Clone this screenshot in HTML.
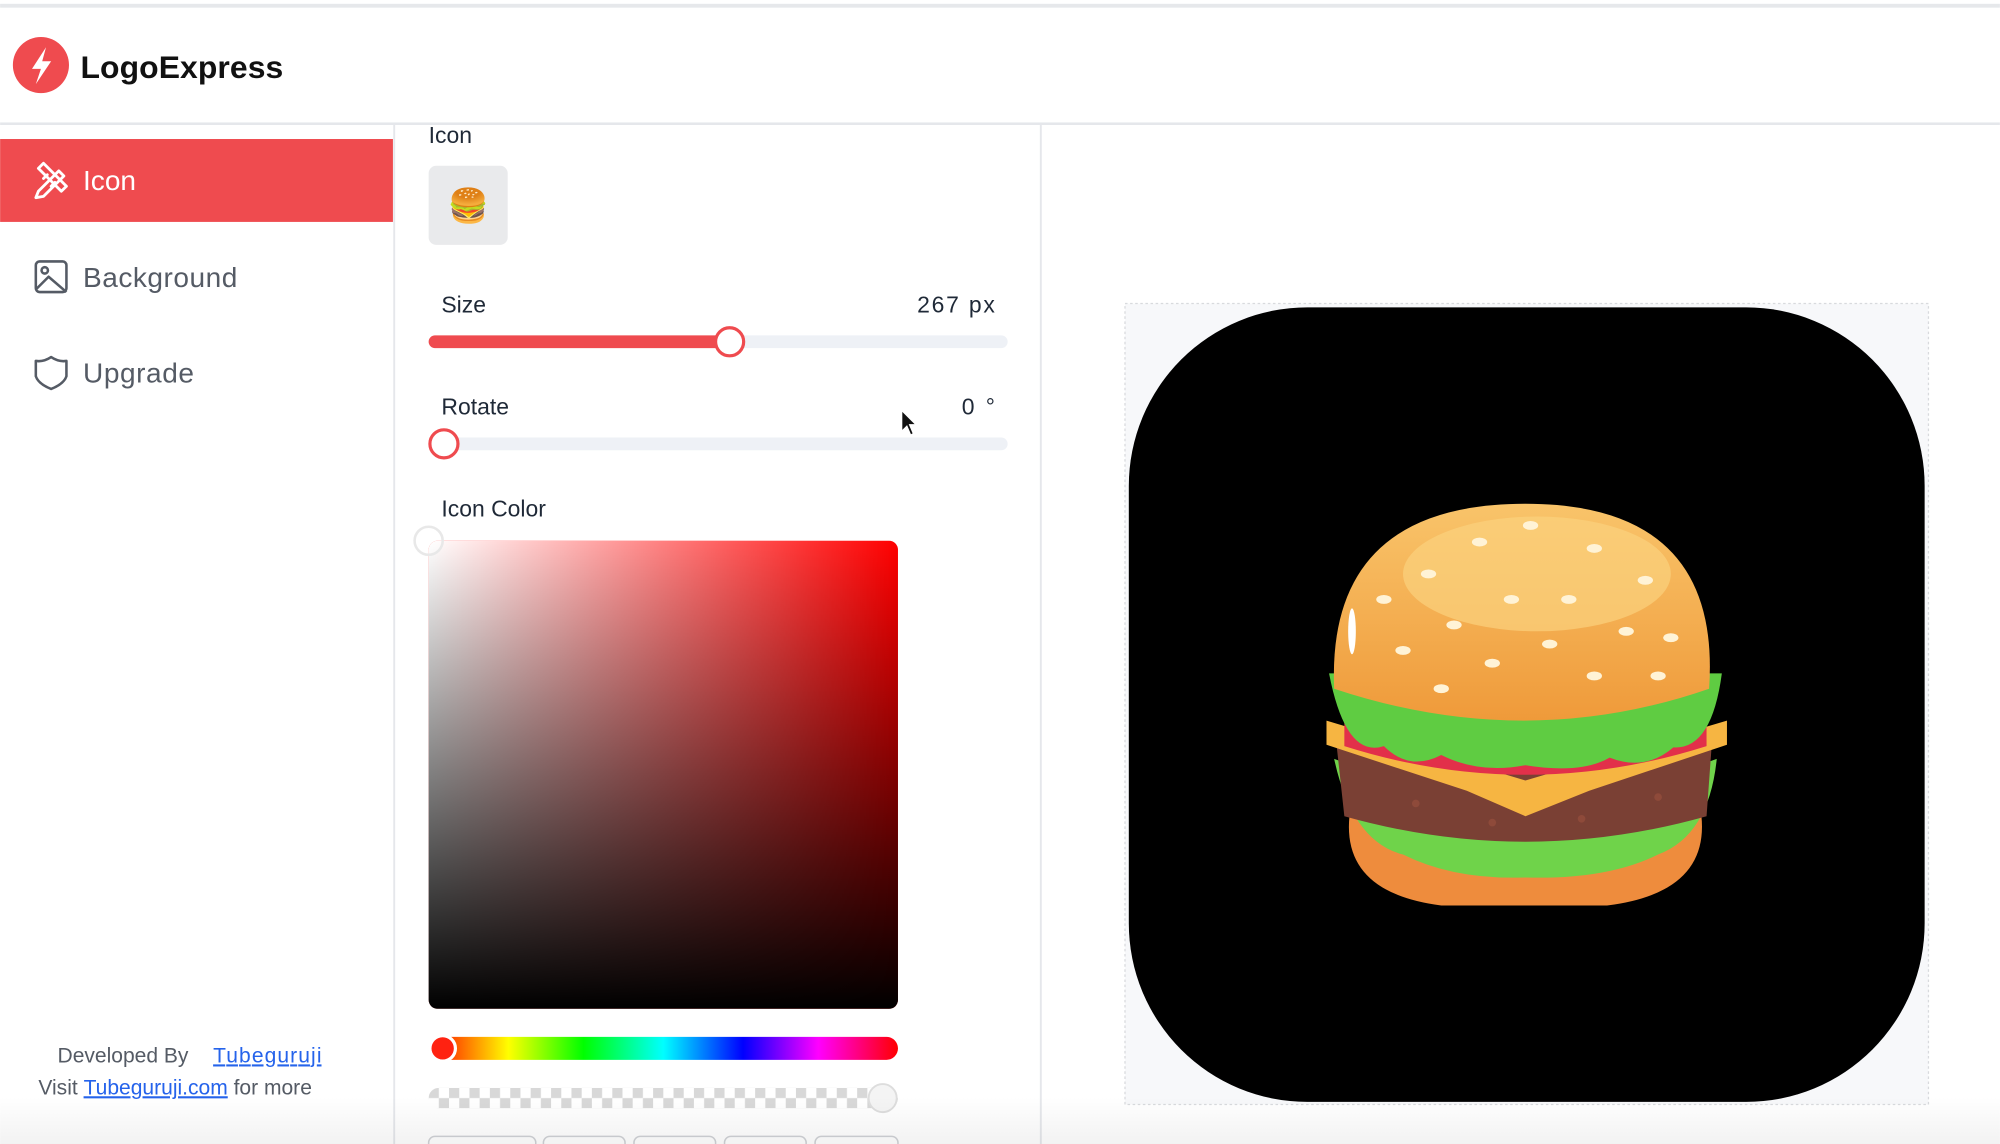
<!DOCTYPE html>
<html><head><meta charset="utf-8"><style>
html,body{margin:0;padding:0;background:#fff;overflow:hidden}
svg{display:block}
text{font-family:"Liberation Sans",Arial,sans-serif}
</style></head><body>
<svg width="2000" height="1144" viewBox="0 0 1568 897" xmlns="http://www.w3.org/2000/svg">
<defs>
<linearGradient id="wh" x1="0" y1="0" x2="1" y2="0"><stop offset="0" stop-color="#fff"/><stop offset="1" stop-color="#fff" stop-opacity="0"/></linearGradient>
<linearGradient id="bk" x1="0" y1="0" x2="0" y2="1"><stop offset="0" stop-color="#000" stop-opacity="0"/><stop offset="1" stop-color="#000"/></linearGradient>
<linearGradient id="hue" x1="0" y1="0" x2="1" y2="0">
<stop offset="0" stop-color="#f00"/><stop offset=".17" stop-color="#ff0"/><stop offset=".33" stop-color="#0f0"/><stop offset=".5" stop-color="#0ff"/><stop offset=".67" stop-color="#00f"/><stop offset=".83" stop-color="#f0f"/><stop offset="1" stop-color="#f00"/></linearGradient>
<pattern id="chk" width="16" height="16" patternUnits="userSpaceOnUse" x="336" y="853"><rect width="16" height="16" fill="#fff"/><rect width="8" height="8" fill="#d8d8d8"/><rect x="8" y="8" width="8" height="8" fill="#d8d8d8"/></pattern>
<linearGradient id="bun" x1="0" y1="0" x2="0" y2="1"><stop offset="0" stop-color="#f9c46a"/><stop offset="1" stop-color="#ef9a3a"/></linearGradient>
<linearGradient id="bfade" x1="0" y1="0" x2="0" y2="1"><stop offset="0" stop-color="#000" stop-opacity="0"/><stop offset="1" stop-color="#000" stop-opacity=".05"/></linearGradient>
</defs>
<rect width="1568" height="897" fill="#fff"/>
<rect x="0" y="3" width="1568" height="3" fill="#e6e8eb"/>
<rect x="0" y="96" width="1568" height="2" fill="#e5e7eb"/>
<!-- logo -->
<circle cx="32" cy="51" r="22" fill="#ef4b4f"/>
<path d="M36 37 L25 54 L32 54 L28 66 L40 48 L33 48 Z" fill="#fff"/>
<text x="63" y="61" font-size="25" font-weight="bold" fill="#111" textLength="159">LogoExpress</text>
<!-- sidebar -->
<rect x="0" y="109" width="308" height="65" fill="#ef4b4f"/>
<line x1="309" y1="98" x2="309" y2="897" stroke="#e5e7eb" stroke-width="1.5"/>
<line x1="816" y1="98" x2="816" y2="897" stroke="#e5e7eb" stroke-width="1.5"/>
<g fill="none" stroke="#fff" stroke-width="2.2" stroke-linecap="round" stroke-linejoin="round">
<path d="M30 150 L46 134 L50 138 L34 154 L28 155 Z"/>
<path d="M30 132 L34 128 L52 146 L48 150 Z"/>
<path d="M34 140 L37 137 M40 146 L43 143"/>
</g>
<text x="65" y="149" font-size="22" fill="#fff">Icon</text>
<g fill="none" stroke="#555b65" stroke-width="2" stroke-linejoin="round">
<rect x="28" y="205" width="24" height="24" rx="3"/>
<circle cx="35" cy="212" r="2.5"/>
<path d="M28 227 L38 217 L52 229"/>
<path d="M40 280 Q46 284 52 283 L52 295 Q50 301 40 305 Q30 301 28 295 L28 283 Q34 284 40 280 Z"/>
</g>
<text x="65" y="225" font-size="22" fill="#555b65" textLength="121">Background</text>
<text x="65" y="300" font-size="22" fill="#555b65" textLength="87">Upgrade</text>
<text x="45" y="833" font-size="16.5" fill="#555b65">Developed By</text>
<text x="167" y="833" font-size="16.5" fill="#2563eb" text-decoration="underline" textLength="85">Tubeguruji</text>
<text x="30" y="858" font-size="16.5" fill="#555b65">Visit <tspan fill="#2563eb" text-decoration="underline">Tubeguruji.com</tspan> for more</text>
<!-- panel -->
<text x="336" y="112" font-size="18" fill="#1f2937">Icon</text>
<rect x="336" y="130" width="62" height="62" rx="6" fill="#e9eaec"/>
<text x="367" y="170" font-size="26" text-anchor="middle" font-family="Noto Color Emoji">🍔</text>
<text x="346" y="245" font-size="18" fill="#1f2937">Size</text>
<text x="780" y="245" font-size="18" fill="#1f2937" text-anchor="end" textLength="61">267 px</text>
<rect x="336" y="263" width="454" height="10" rx="5" fill="#eef1f6"/>
<rect x="336" y="263" width="236" height="10" rx="5" fill="#ef4b4f"/>
<circle cx="572" cy="268" r="11" fill="#fff" stroke="#ef4b4f" stroke-width="2.5"/>
<text x="346" y="325" font-size="18" fill="#1f2937">Rotate</text>
<text x="780" y="325" font-size="18" fill="#1f2937" text-anchor="end" textLength="26">0 °</text>
<rect x="336" y="343" width="454" height="10" rx="5" fill="#eef1f6"/>
<circle cx="348" cy="348" r="11" fill="#fff" stroke="#ef4b4f" stroke-width="2.5"/>
<path d="M707 322 L707 338 L711 334 L714 341 L716 340 L713 333 L718 333 Z" fill="#111" stroke="#fff" stroke-width="0.8"/>
<text x="346" y="405" font-size="18" fill="#1f2937">Icon Color</text>
<rect x="336" y="424" width="368" height="367" rx="7" fill="#f00"/>
<rect x="336" y="424" width="368" height="367" rx="7" fill="url(#wh)"/>
<rect x="336" y="424" width="368" height="367" rx="7" fill="url(#bk)"/>
<circle cx="336" cy="424" r="11" fill="#fff" fill-opacity=".3" stroke="#e8e8e8" stroke-width="2"/>
<rect x="336" y="813" width="368" height="18" rx="9" fill="url(#hue)"/>
<circle cx="347" cy="822" r="10" fill="#f21" stroke="#fff" stroke-width="2.5"/>
<rect x="336" y="853" width="368" height="16" rx="8" fill="url(#chk)"/>
<circle cx="692" cy="861" r="11" fill="#f4f4f4" stroke="#ddd" stroke-width="1.5"/>
<g fill="#fff" stroke="#d0d2d6" stroke-width="1.2">
<rect x="336" y="891" width="84" height="20" rx="5"/><rect x="426" y="891" width="64" height="20" rx="5"/><rect x="497" y="891" width="64" height="20" rx="5"/><rect x="568" y="891" width="64" height="20" rx="5"/><rect x="639" y="891" width="65" height="20" rx="5"/>
</g>
<!-- preview -->
<rect x="882" y="238" width="630" height="628" fill="#f7f8fa" stroke="#d8dadd" stroke-dasharray="2 2"/>
<rect x="885" y="241" width="624" height="623" rx="140" fill="#000"/>
<!-- burger (bottom-up) -->
<path d="M1058 640 Q1196 625 1334 640 Q1340 700 1260 710 L1130 710 Q1052 700 1058 640 Z" fill="#ee8c3d"/>
<path d="M1046 595 Q1060 660 1100 670 Q1140 690 1196 688 Q1260 690 1300 670 Q1340 655 1346 595 Q1196 650 1046 595 Z" fill="#6fd34a"/>
<path d="M1048 585 Q1196 625 1342 585 L1338 640 Q1196 680 1054 640 Z" fill="#7a4034"/>
<g fill="#8e4a3a"><circle cx="1110" cy="630" r="3"/><circle cx="1170" cy="645" r="3"/><circle cx="1240" cy="642" r="3"/><circle cx="1300" cy="625" r="3"/></g>
<path d="M1040 565 L1196 612 L1354 565 L1354 584 L1246 620 L1196 640 L1150 620 L1040 584 Z" fill="#f6b542"/>
<path d="M1054 560 Q1196 620 1338 560 L1338 585 Q1196 630 1054 585 Z" fill="#e2304a"/>
<path d="M1042 528 Q1055 595 1085 585 Q1105 605 1130 592 Q1160 607 1196 600 Q1240 607 1262 594 Q1290 605 1312 586 Q1342 588 1350 528 Z" fill="#5fcc42"/>
<path d="M1046 540 Q1040 395 1196 395 Q1350 395 1340 540 Q1196 590 1046 540 Z" fill="url(#bun)"/>
<ellipse cx="1205" cy="450" rx="105" ry="45" fill="#fbd27e" opacity=".7"/>
<g fill="#fff3d6">
<ellipse cx="1120" cy="450" rx="6" ry="3.5"/><ellipse cx="1160" cy="425" rx="6" ry="3.5"/><ellipse cx="1200" cy="412" rx="6" ry="3.5"/><ellipse cx="1250" cy="430" rx="6" ry="3.5"/><ellipse cx="1290" cy="455" rx="6" ry="3.5"/>
<ellipse cx="1140" cy="490" rx="6" ry="3.5"/><ellipse cx="1185" cy="470" rx="6" ry="3.5"/><ellipse cx="1230" cy="470" rx="6" ry="3.5"/><ellipse cx="1275" cy="495" rx="6" ry="3.5"/><ellipse cx="1310" cy="500" rx="6" ry="3.5"/>
<ellipse cx="1100" cy="510" rx="6" ry="3.5"/><ellipse cx="1170" cy="520" rx="6" ry="3.5"/><ellipse cx="1215" cy="505" rx="6" ry="3.5"/><ellipse cx="1250" cy="530" rx="6" ry="3.5"/><ellipse cx="1300" cy="530" rx="6" ry="3.5"/><ellipse cx="1130" cy="540" rx="6" ry="3.5"/><ellipse cx="1085" cy="470" rx="6" ry="3.5"/>
</g>
<ellipse cx="1060" cy="495" rx="3" ry="18" fill="#fff"/>
<rect x="0" y="860" width="1568" height="37" fill="url(#bfade)"/>
</svg>
</body></html>
